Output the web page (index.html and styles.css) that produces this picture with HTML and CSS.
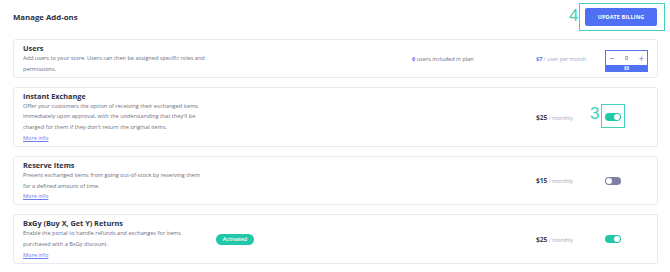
FILE: index.html
```html
<!DOCTYPE html>
<html lang="en">
<head>
    <meta charset="UTF-8">
    <meta name="viewport" content="width=device-width, initial-scale=1.0">
    <title>Manage Add-ons</title>
    <link rel="stylesheet" href="styles.css">
</head>
<body>
    <div class="page">
        <header class="top">
            <h1>Manage Add-ons</h1>
            <div class="billing">
                <span class="mark mark-4">4</span>
                <span class="mark-box box-4"></span>
                <button class="btn-billing">UPDATE BILLING</button>
            </div>
        </header>

        <div class="addons">
            <!-- Users -->
            <div class="addon">
                <div class="info">
                    <div class="addon-title">Users</div>
                    <div class="addon-desc">Add users to your store. Users can then be assigned specific roles and permissions.</div>
                </div>
                <div class="middle"><span class="included"><b>6</b> users included in plan</span></div>
                <div class="price"><b class="blue">$7</b> / user per month</div>
                <div class="control">
                    <div class="stepper">
                        <div class="stepper-row">
                            <span class="step">&minus;</span>
                            <span class="count">0</span>
                            <span class="step">+</span>
                        </div>
                        <div class="stepper-total">$0</div>
                    </div>
                </div>
            </div>

            <!-- Instant Exchange -->
            <div class="addon">
                <div class="info">
                    <div class="addon-title">Instant Exchange</div>
                    <div class="addon-desc">Offer your customers the option of receiving their exchanged items immediately upon approval, with the understanding that they'll be charged for them if they don't return the original items.</div>
                    <a class="more" href="#">More info</a>
                </div>
                <div class="middle"></div>
                <div class="price"><b>$25</b> / monthly</div>
                <div class="control">
                    <span class="mark mark-3">3</span>
                    <span class="mark-box box-3"></span>
                    <span class="toggle on"></span>
                </div>
            </div>

            <!-- Reserve Items -->
            <div class="addon">
                <div class="info">
                    <div class="addon-title">Reserve Items</div>
                    <div class="addon-desc">Prevent exchanged items from going out-of-stock by reserving them for a defined amount of time.</div>
                    <a class="more" href="#">More info</a>
                </div>
                <div class="middle"></div>
                <div class="price"><b>$15</b> / monthly</div>
                <div class="control">
                    <span class="toggle"></span>
                </div>
            </div>

            <!-- BxGy -->
            <div class="addon">
                <div class="info">
                    <div class="addon-title">BxGy (Buy X, Get Y) Returns</div>
                    <div class="addon-desc">Enable the portal to handle refunds and exchanges for items purchased with a BxGy discount.</div>
                    <a class="more" href="#">More info</a>
                </div>
                <div class="middle"><span class="badge">Activated</span></div>
                <div class="price"><b>$25</b> / monthly</div>
                <div class="control">
                    <span class="toggle on"></span>
                </div>
            </div>
        </div>
    </div>
</body>
</html>
```

FILE: styles.css
```css
body {
    margin: 0;
    background: #fff;
    font-family: "Open Sans", "Liberation Sans", sans-serif;
    color: #2b3044;
}

.page {
    padding: 4px 12px 0 13px;
}

.top {
    display: flex;
    justify-content: space-between;
    align-items: center;
    height: 29px;
    margin-bottom: 6px;
}

.top h1 {
    margin: 0;
    font-size: 7.8px;
    font-weight: 700;
    color: #2b3044;
    padding-bottom: 3px;
}

.billing {
    position: relative;
    margin-right: 1px;
    margin-bottom: 3px;
}

.btn-billing {
    display: block;
    width: 72px;
    height: 18px;
    border: 0;
    border-radius: 2px;
    background: #4f70f5;
    color: #fff;
    font-family: inherit;
    font-size: 5.5px;
    font-weight: 700;
    letter-spacing: 0.1px;
    padding: 0;
}

/* annotation marks drawn over the screenshot */
.mark {
    position: absolute;
    color: #3fd1b9;
    font-family: "Liberation Sans", sans-serif;
    font-size: 17px;
    line-height: 1;
}

.mark-box {
    position: absolute;
    border: 1.5px solid #3fd1b9;
}

.mark-4 {
    left: -16px;
    top: -1px;
}

.box-4 {
    left: -6px;
    top: -5px;
    width: 84px;
    height: 26px;
}

.addons {
    display: flex;
    flex-direction: column;
    gap: 9px;
}

.addon {
    display: grid;
    grid-template-columns: 190px 1fr 69px 43px;
    align-items: center;
    border: 1px solid #e8eaf3;
    border-radius: 3px;
    padding: 3px 9px 2px 9px;
}

.addon-title {
    font-size: 7.3px;
    font-weight: 700;
    line-height: 10px;
    color: #2b3044;
}

.addon-desc {
    font-size: 5.6px;
    line-height: 10.8px;
    color: #6b6f82;
    width: 184px;
}

.more {
    display: block;
    font-size: 5.6px;
    line-height: 10.8px;
    color: #6a7cf0;
}

.middle {
    font-size: 5.6px;
    color: #6b6f82;
}

.included {
    margin-left: 199px;
}

.included b {
    color: #5b72f0;
}

.badge {
    display: inline-block;
    margin-left: 3px;
    width: 38px;
    height: 11px;
    line-height: 11px;
    border-radius: 6px;
    background: #22c6a8;
    color: #fff;
    font-size: 5.4px;
    font-weight: 600;
    text-align: center;
}

.price {
    font-size: 5.4px;
    color: #a4a7b5;
}

.price b {
    font-size: 6.6px;
    color: #3a3f55;
}

.price b.blue {
    font-size: 5.6px;
    color: #5b72f0;
}

.control {
    position: relative;
    display: flex;
    align-items: center;
}

.stepper {
    width: 41px;
    border: 1px solid #5b72f0;
    margin-top: 5px;
}

.stepper-row {
    display: flex;
    justify-content: space-between;
    align-items: center;
    height: 14px;
    padding: 0 3px;
    color: #5b72f0;
    font-size: 9px;
}

.stepper-row .count {
    font-size: 5.5px;
    color: #2b3044;
}

.stepper-total {
    background: #4f70f5;
    color: #fff;
    font-size: 4.5px;
    font-weight: 700;
    text-align: center;
    height: 6px;
    line-height: 6px;
}

.toggle {
    position: relative;
    display: block;
    width: 16px;
    height: 8px;
    border-radius: 4px;
    background: #7c7fa3;
}

.toggle::after {
    content: "";
    position: absolute;
    top: 1px;
    left: 1px;
    width: 6px;
    height: 6px;
    border-radius: 50%;
    background: #fff;
}

.toggle.on {
    background: #22c6a8;
}

.toggle.on::after {
    left: 9px;
}

.mark-3 {
    left: -15px;
    top: -8px;
}

.box-3 {
    left: -4px;
    top: -9px;
    width: 22px;
    height: 22px;
}
```
